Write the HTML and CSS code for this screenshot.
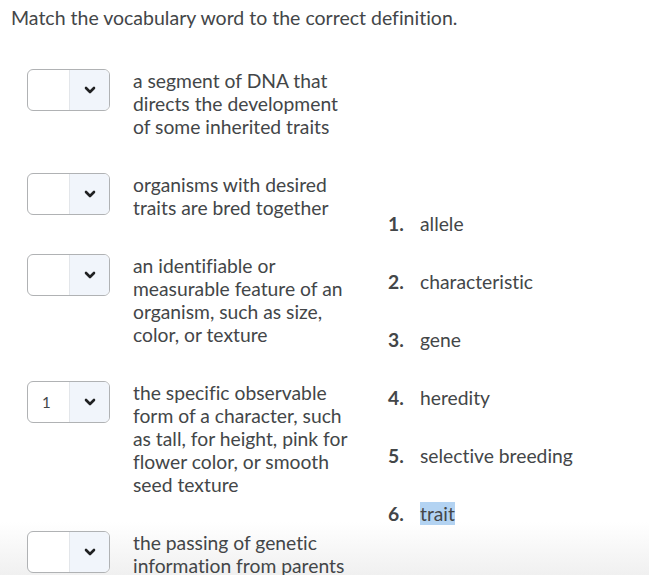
FILE: index.html
```html
<!DOCTYPE html>
<html>
<head>
<meta charset="utf-8">
<link rel="stylesheet" href="styles.css">
</head>
<body>
<div class="page">
  <h1 class="title">Match the vocabulary word to the correct definition.</h1>
  <div class="match">
    <div class="defs">
      <div class="row">
        <div class="select"><span class="val"></span><span class="btn"><svg width="12" height="8" viewBox="0 0 12 8"><path d="M2 2 L6 6 L10 2" fill="none" stroke="#202122" stroke-width="2.6" stroke-linecap="round" stroke-linejoin="round"/></svg></span></div>
        <p class="def">a segment of DNA that directs the development of some inherited traits</p>
      </div>
      <div class="row">
        <div class="select"><span class="val"></span><span class="btn"><svg width="12" height="8" viewBox="0 0 12 8"><path d="M2 2 L6 6 L10 2" fill="none" stroke="#202122" stroke-width="2.6" stroke-linecap="round" stroke-linejoin="round"/></svg></span></div>
        <p class="def">organisms with desired traits are bred together</p>
      </div>
      <div class="row">
        <div class="select"><span class="val"></span><span class="btn"><svg width="12" height="8" viewBox="0 0 12 8"><path d="M2 2 L6 6 L10 2" fill="none" stroke="#202122" stroke-width="2.6" stroke-linecap="round" stroke-linejoin="round"/></svg></span></div>
        <p class="def">an identifiable or measurable feature of an organism, such as size, color, or texture</p>
      </div>
      <div class="row">
        <div class="select"><span class="val">1</span><span class="btn"><svg width="12" height="8" viewBox="0 0 12 8"><path d="M2 2 L6 6 L10 2" fill="none" stroke="#202122" stroke-width="2.6" stroke-linecap="round" stroke-linejoin="round"/></svg></span></div>
        <p class="def">the specific observable form of a character, such as tall, for height, pink for flower color, or smooth seed texture</p>
      </div>
      <div class="row">
        <div class="select"><span class="val"></span><span class="btn"><svg width="12" height="8" viewBox="0 0 12 8"><path d="M2 2 L6 6 L10 2" fill="none" stroke="#202122" stroke-width="2.6" stroke-linecap="round" stroke-linejoin="round"/></svg></span></div>
        <p class="def">the passing of genetic information from parents to offspring</p>
      </div>
    </div>
    <ol class="words">
      <li><span class="num">1.</span><span>allele</span></li>
      <li><span class="num">2.</span><span>characteristic</span></li>
      <li><span class="num">3.</span><span>gene</span></li>
      <li><span class="num">4.</span><span>heredity</span></li>
      <li><span class="num">5.</span><span>selective breeding</span></li>
      <li><span class="num">6.</span><span class="hl">trait</span></li>
    </ol>
  </div>
</div>
</body>
</html>
```

FILE: styles.css
```css
html, body {
  margin: 0;
  padding: 0;
  height: 575px;
  overflow: hidden;
}
body {
  font-family: Lato, "Open Sans", sans-serif;
  color: #434648;
  font-variant-ligatures: none;
  background: linear-gradient(to bottom, #fff 0, #fff 522px, #f0f0f0 575px);
}
.page {
  padding: 6px 0 0 11px;
}
.title {
  margin: 0;
  font-size: 19.5px;
  font-weight: 400;
  line-height: 24px;
  color: #434648;
}
.match {
  display: flex;
  margin-top: 39px;
  padding-left: 16px;
}
.defs {
  display: flex;
  flex-direction: column;
  gap: 35px;
  width: 361px;
}
.row {
  display: flex;
  gap: 23px;
  align-items: flex-start;
}
.select {
  flex: none;
  width: 81px;
  height: 40px;
  border: 1px solid #b0b2b4;
  border-radius: 6px;
  display: flex;
  overflow: hidden;
  background: #fff;
}
.val {
  width: 42px;
  border-right: 1px solid #e3e6ea;
  font-size: 15px;
  line-height: 40px;
  padding-left: 14px;
  box-sizing: border-box;
  color: #434648;
}
.btn {
  flex: 1;
  background: #f1f5fb;
  display: flex;
  align-items: center;
  justify-content: center;
}
.btn svg {
  display: block;
}
.def {
  margin: 0;
  width: 224px;
  font-size: 19.3px;
  line-height: 23px;
  color: #434648;
}
.words {
  list-style: none;
  margin: 0;
  padding: 143px 0 0 0;
  display: flex;
  flex-direction: column;
  gap: 35px;
}
.words li {
  display: flex;
  font-size: 19.3px;
  line-height: 23px;
}
.num {
  width: 32px;
  font-weight: 700;
  color: #434648;
}
.hl {
  background: #b3d3f2;
}
```
